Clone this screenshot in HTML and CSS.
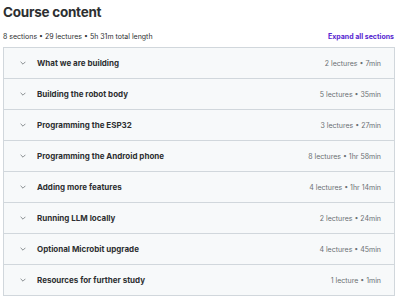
FILE: index.html
```html
<!DOCTYPE html>
<html lang="en">
<head>
    <meta charset="UTF-8">
    <meta name="viewport" content="width=device-width, initial-scale=1.0">
    <title>Course content</title>
    <link rel="stylesheet" href="styles.css">
</head>
<body>
    <div class="course-content">
        <h2>Course content</h2>
        <div class="summary">
            <span>8 sections • 29 lectures • 5h 31m total length</span>
            <button class="expand-all">Expand all sections</button>
        </div>

        <div class="sections">
            <div class="section">
                <span class="chevron"><svg viewBox="0 0 10 6" width="6" height="4"><path d="M1 1l4 4 4-4" fill="none" stroke="currentColor" stroke-width="1.3"/></svg></span>
                <span class="section-title">What we are building</span>
                <span class="section-meta">2 lectures • 7min</span>
            </div>
            <div class="section">
                <span class="chevron"><svg viewBox="0 0 10 6" width="6" height="4"><path d="M1 1l4 4 4-4" fill="none" stroke="currentColor" stroke-width="1.3"/></svg></span>
                <span class="section-title">Building the robot body</span>
                <span class="section-meta">5 lectures • 35min</span>
            </div>
            <div class="section">
                <span class="chevron"><svg viewBox="0 0 10 6" width="6" height="4"><path d="M1 1l4 4 4-4" fill="none" stroke="currentColor" stroke-width="1.3"/></svg></span>
                <span class="section-title">Programming the ESP32</span>
                <span class="section-meta">3 lectures • 27min</span>
            </div>
            <div class="section">
                <span class="chevron"><svg viewBox="0 0 10 6" width="6" height="4"><path d="M1 1l4 4 4-4" fill="none" stroke="currentColor" stroke-width="1.3"/></svg></span>
                <span class="section-title">Programming the Android phone</span>
                <span class="section-meta">8 lectures • 1hr 58min</span>
            </div>
            <div class="section">
                <span class="chevron"><svg viewBox="0 0 10 6" width="6" height="4"><path d="M1 1l4 4 4-4" fill="none" stroke="currentColor" stroke-width="1.3"/></svg></span>
                <span class="section-title">Adding more features</span>
                <span class="section-meta">4 lectures • 1hr 14min</span>
            </div>
            <div class="section">
                <span class="chevron"><svg viewBox="0 0 10 6" width="6" height="4"><path d="M1 1l4 4 4-4" fill="none" stroke="currentColor" stroke-width="1.3"/></svg></span>
                <span class="section-title">Running LLM locally</span>
                <span class="section-meta">2 lectures • 24min</span>
            </div>
            <div class="section">
                <span class="chevron"><svg viewBox="0 0 10 6" width="6" height="4"><path d="M1 1l4 4 4-4" fill="none" stroke="currentColor" stroke-width="1.3"/></svg></span>
                <span class="section-title">Optional Microbit upgrade</span>
                <span class="section-meta">4 lectures • 45min</span>
            </div>
            <div class="section">
                <span class="chevron"><svg viewBox="0 0 10 6" width="6" height="4"><path d="M1 1l4 4 4-4" fill="none" stroke="currentColor" stroke-width="1.3"/></svg></span>
                <span class="section-title">Resources for further study</span>
                <span class="section-meta">1 lecture • 1min</span>
            </div>
        </div>
    </div>
</body>
</html>
```

FILE: styles.css
```css
body {
    font-family: Inter, "Noto Sans", sans-serif;
    background-color: white;
    color: #2d2f31;
    margin: 0;
    padding: 0;
}
.course-content {
    padding: 4px 5px 0 3px;
}
h2 {
    font-size: 13.5px;
    font-weight: 700;
    margin: 0;
    line-height: 16px;
    letter-spacing: -0.25px;
}
.summary {
    display: flex;
    justify-content: space-between;
    align-items: center;
    font-size: 7px;
    color: #2d2f31;
    margin-top: 11px;
    height: 10px;
    padding-right: 1px;
}
.expand-all {
    background: none;
    border: none;
    padding: 0;
    font-family: inherit;
    font-size: 7px;
    font-weight: 700;
    color: #5624d0;
    cursor: pointer;
}
.sections {
    margin-top: 6px;
    border: 1px solid #d1d7dc;
}
.section {
    display: flex;
    align-items: center;
    height: 30px;
    background-color: #f7f9fa;
    border-bottom: 1px solid #d1d7dc;
    padding: 0 13px 0 16px;
}
.section:last-child {
    border-bottom: none;
}
.chevron {
    display: flex;
    color: #6a6f73;
    width: 17px;
}
.section-title {
    flex: 1;
    font-size: 8px;
    font-weight: 700;
}
.section-meta {
    font-size: 7px;
    color: #6a6f73;
}
```
